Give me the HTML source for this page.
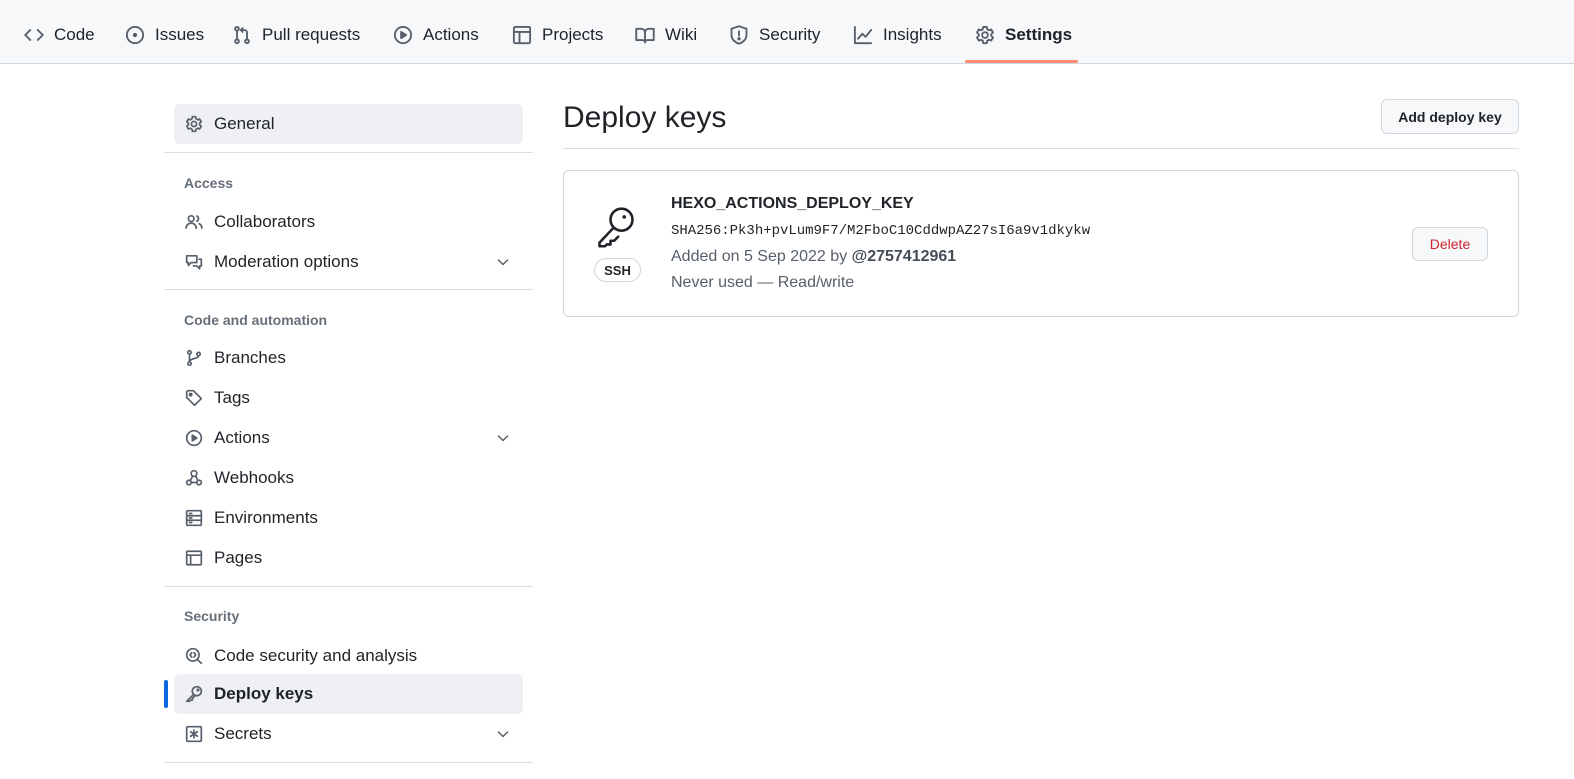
<!DOCTYPE html>
<html><head><meta charset="utf-8"><style>
*{box-sizing:border-box;margin:0;padding:0}
body{width:1574px;height:779px;background:#fff;font-family:"Liberation Sans",sans-serif;color:#1f2328;position:relative;overflow:hidden}
.nav{position:absolute;left:0;top:0;width:1574px;height:64px;background:#f6f8fa;border-bottom:1px solid #d0d7de}
.ni{position:absolute;top:25px;font-size:17px;line-height:20px;color:#1f2328;display:flex;align-items:center;gap:10px}
.ni svg{width:20px;height:20px}
.ul{position:absolute;left:965px;top:60px;width:113px;height:3px;background:#fd8c73;border-radius:2px}
svg{fill:none;stroke:#57606a;stroke-width:1.5;stroke-linecap:round;stroke-linejoin:round}
.si{position:absolute;left:174px;width:349px;height:40px;display:flex;align-items:center;font-size:17px;border-radius:6px}
.si svg{position:absolute;left:11px;width:18px;height:18px}
.si span{position:absolute;left:40px}
.si .ch{left:auto;right:12px;width:16px;height:16px}
.hd{position:absolute;left:184px;font-size:14px;color:#57606a;font-weight:bold;opacity:.9}
.dv{position:absolute;left:164px;width:369px;height:1px;background:#d8dee4}
.btn{position:absolute;border:1px solid #d0d7de;background:#f6f8fa;border-radius:6px;font-size:14px;font-weight:bold;display:flex;align-items:center;justify-content:center}
</style></head><body>
<div class="nav">
<div class="ni" style="left:24px"><svg viewBox="0 0 16 16"><path d="M5 4L1 8l4 4M11 4l4 4-4 4"/></svg>Code</div>
<div class="ni" style="left:125px"><svg viewBox="0 0 16 16"><circle cx="8" cy="8" r="6.5"/><circle cx="8" cy="8" r="1" fill="#57606a"/></svg>Issues</div>
<div class="ni" style="left:232px"><svg viewBox="0 0 16 16"><circle cx="4" cy="3" r="1.5"/><circle cx="4" cy="13" r="1.5"/><circle cx="12" cy="13" r="1.5"/><path d="M4 4.5v7M12 11.5V6a2 2 0 0 0-2-2H7M8.5 2.5L7 4l1.5 1.5"/></svg>Pull requests</div>
<div class="ni" style="left:393px"><svg viewBox="0 0 16 16"><circle cx="8" cy="8" r="6.5"/><path d="M6.5 5.5v5l4-2.5z" fill="#57606a"/></svg>Actions</div>
<div class="ni" style="left:512px"><svg viewBox="0 0 16 16"><rect x="1.5" y="1.5" width="13" height="13" rx="1"/><path d="M1.5 5.5h13M6 5.5v9"/></svg>Projects</div>
<div class="ni" style="left:635px"><svg viewBox="0 0 16 16"><path d="M1 3h4a3 3 0 0 1 3 3v8a2 2 0 0 0-2-2H1zM15 3h-4a3 3 0 0 0-3 3v8a2 2 0 0 1 2-2h5z"/></svg>Wiki</div>
<div class="ni" style="left:729px"><svg viewBox="0 0 16 16"><path d="M8 1l6 2v5c0 3.5-3 6-6 7-3-1-6-3.5-6-7V3z"/><path d="M8 5v3.5"/><circle cx="8" cy="11" r=".6" fill="#57606a"/></svg>Security</div>
<div class="ni" style="left:853px"><svg viewBox="0 0 16 16"><path d="M1.5 1.5v13h13M4 11l3.5-4 2.5 2.5L14.5 4"/></svg>Insights</div>
<div class="ni" style="left:975px;font-weight:bold"><svg viewBox="0 0 16 16"><circle cx="8" cy="8" r="2.3"/><path d="M6.6 1.5h2.8l.4 1.9 1.4.8 1.8-.6 1.4 2.4-1.4 1.3v1.4l1.4 1.3-1.4 2.4-1.8-.6-1.4.8-.4 1.9H6.6l-.4-1.9-1.4-.8-1.8.6-1.4-2.4 1.4-1.3V7.3L1.6 6l1.4-2.4 1.8.6 1.4-.8z"/></svg>Settings</div>
<div class="ul"></div>
</div>

<div class="si" style="top:104px;background:#eef0f3"><svg viewBox="0 0 16 16"><circle cx="8" cy="8" r="2.3"/><path d="M6.6 1.5h2.8l.4 1.9 1.4.8 1.8-.6 1.4 2.4-1.4 1.3v1.4l1.4 1.3-1.4 2.4-1.8-.6-1.4.8-.4 1.9H6.6l-.4-1.9-1.4-.8-1.8.6-1.4-2.4 1.4-1.3V7.3L1.6 6l1.4-2.4 1.8.6 1.4-.8z"/></svg><span>General</span></div>
<div class="dv" style="top:152px"></div>
<div class="hd" style="top:175px">Access</div>
<div class="si" style="top:202px"><svg viewBox="0 0 16 16"><circle cx="5.5" cy="5" r="2.5"/><path d="M1 13.5a4.5 4.5 0 0 1 9 0M10.5 2.7a2.5 2.5 0 0 1 0 4.6M12.5 9.5a4.5 4.5 0 0 1 2.5 4"/></svg><span>Collaborators</span></div>
<div class="si" style="top:242px"><svg viewBox="0 0 16 16"><path d="M1.5 2.5h9v6h-5l-2.5 2.5v-2.5h-1.5zM12.5 5.5h2v6h-1.5v2.5l-2.5-2.5h-3"/></svg><span>Moderation options</span><svg class="ch" viewBox="0 0 16 16"><path d="M3.5 6l4.5 4.5L12.5 6"/></svg></div>
<div class="dv" style="top:289px"></div>
<div class="hd" style="top:312px">Code and automation</div>
<div class="si" style="top:338px"><svg viewBox="0 0 16 16"><circle cx="4" cy="3" r="1.5"/><circle cx="4" cy="13" r="1.5"/><circle cx="12" cy="4.5" r="1.5"/><path d="M4 4.5v7M12 6c0 3-8 2-8 5.5"/></svg><span>Branches</span></div>
<div class="si" style="top:378px"><svg viewBox="0 0 16 16"><path d="M1.5 2.5v5l7 7 6-6-7-7h-5z"/><circle cx="5" cy="5" r="1" fill="#57606a"/></svg><span>Tags</span></div>
<div class="si" style="top:418px"><svg viewBox="0 0 16 16"><circle cx="8" cy="8" r="6.5"/><path d="M6.5 5.5v5l4-2.5z" fill="#57606a"/></svg><span>Actions</span><svg class="ch" viewBox="0 0 16 16"><path d="M3.5 6l4.5 4.5L12.5 6"/></svg></div>
<div class="si" style="top:458px"><svg viewBox="0 0 16 16"><circle cx="8" cy="4" r="2.5"/><circle cx="3.5" cy="12" r="2"/><circle cx="12.5" cy="12" r="2"/><path d="M7 6.3L4.5 10.5M6 12h4.5M9.5 6.5l2 3.5"/></svg><span>Webhooks</span></div>
<div class="si" style="top:498px"><svg viewBox="0 0 16 16"><rect x="1.5" y="1.5" width="13" height="13" rx="1"/><path d="M1.5 6h13M1.5 10h13M4 4h2M4 8h2M4 12h2"/></svg><span>Environments</span></div>
<div class="si" style="top:538px"><svg viewBox="0 0 16 16"><rect x="1.5" y="2" width="13" height="12" rx="1"/><path d="M1.5 5.5h13M5 5.5v8.5"/></svg><span>Pages</span></div>
<div class="dv" style="top:586px"></div>
<div class="hd" style="top:608px">Security</div>
<div class="si" style="top:636px"><svg viewBox="0 0 16 16"><circle cx="7" cy="7" r="5.5"/><path d="M11 11l3.5 3.5M6 5L4.5 7 6 9M8 5l1.5 2L8 9"/></svg><span>Code security and analysis</span></div>
<div class="si" style="top:674px;background:#eef0f3;font-weight:bold"><svg viewBox="0 0 16 16"><circle cx="10.5" cy="5.5" r="4"/><path d="M7.7 8.3L1.5 14.5h2.5l1-1h1.5v-1.5l2.5-2.5"/><circle cx="11.5" cy="4.5" r=".6" fill="#57606a"/></svg><span>Deploy keys</span></div>
<div style="position:absolute;left:164px;top:680px;width:4px;height:28px;background:#0969da;border-radius:2px"></div>
<div class="si" style="top:714px"><svg viewBox="0 0 16 16"><rect x="1.5" y="1.5" width="13" height="13" rx="1"/><path d="M8 4.5v7M5 6l6 4M11 6l-6 4"/></svg><span>Secrets</span><svg class="ch" viewBox="0 0 16 16"><path d="M3.5 6l4.5 4.5L12.5 6"/></svg></div>
<div class="dv" style="top:762px"></div>

<div style="position:absolute;left:563px;top:100px;font-size:30px;line-height:36px">Deploy keys</div>
<div class="btn" style="left:1381px;top:99px;width:138px;height:35px">Add deploy key</div>
<div style="position:absolute;left:563px;top:148px;width:956px;height:1px;background:#d8dee4"></div>
<div style="position:absolute;left:563px;top:170px;width:956px;height:147px;border:1px solid #d0d7de;border-radius:6px"></div>
<svg style="position:absolute;left:594px;top:204px;width:44px;height:46px" viewBox="0 0 24 24"><g style="stroke:#1f2328;stroke-width:1.4"><circle cx="15" cy="8" r="6"/><path d="M10.8 12.3L3 20.5v2h3l1-1h2v-2h2l2.2-2.2"/></g><circle cx="16.5" cy="6.5" r="1" fill="#1f2328" stroke="none"/></svg>
<div style="position:absolute;left:594px;top:258px;width:47px;height:24px;border:1px solid #d0d7de;border-radius:12px;font-size:13px;font-weight:bold;display:flex;align-items:center;justify-content:center">SSH</div>
<div style="position:absolute;left:671px;top:195px;font-size:16px;font-weight:bold;color:#1f2328">HEXO_ACTIONS_DEPLOY_KEY</div>
<div style="position:absolute;left:671px;top:223px;font-size:14px;font-family:'Liberation Mono',monospace;letter-spacing:-0.02px">SHA256:Pk3h+pvLum9F7/M2FboC10CddwpAZ27sI6a9v1dkykw</div>
<div style="position:absolute;left:671px;top:248px;font-size:16px;color:#57606a">Added on 5 Sep 2022 by <b style="color:#444c56">@2757412961</b></div>
<div style="position:absolute;left:671px;top:274px;font-size:16px;color:#57606a">Never used — Read/write</div>
<div class="btn" style="left:1412px;top:227px;width:76px;height:34px;color:#cf222e;font-weight:normal">Delete</div>
</body></html>
